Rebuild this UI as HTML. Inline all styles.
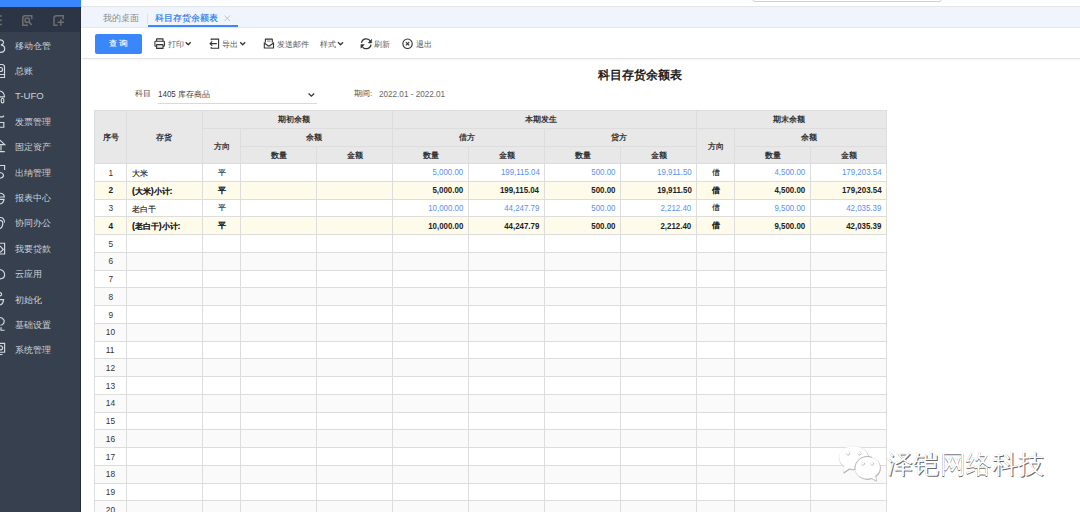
<!DOCTYPE html><html><head><meta charset="utf-8"><style>
*{margin:0;padding:0;box-sizing:border-box}
html,body{width:1080px;height:512px;overflow:hidden;background:#fff;font-family:"Liberation Sans",sans-serif;color:#333}
.a{position:absolute}
svg{position:absolute;overflow:visible}
.side{left:0;top:0;width:81px;height:512px;background:#36404e;border-right:1px solid #262d37}
.blue{left:0;top:0;width:81px;height:7px;background:#3a86ff}
.sidetop{left:0;top:7px;width:80px;height:25.3px;background:#2c3546}
.mi{left:15px;font-size:9px;color:#cdd1d7;line-height:12px;white-space:nowrap}
.tabbar{left:81px;top:6px;width:999px;height:22px;background:#f0f5fd;border-top:1px solid #e3e6eb;border-bottom:1px solid #e6eaf0}
.tb{font-size:7.7px;color:#5a5a5a;white-space:nowrap;line-height:10px}
.cell{position:absolute;border-right:1px solid #dddddd;border-bottom:1px solid #dddddd;display:flex;align-items:center;justify-content:center;font-size:8.5px;white-space:nowrap;overflow:visible;color:#333}
.hd{background:#e8e8e8;font-weight:bold;color:#333;font-size:8.2px}
.r{justify-content:flex-end;padding-right:4.5px}
.l{justify-content:flex-start;padding-left:5px}
.n{display:inline-block;font-size:9.3px;transform:scaleX(.85);transform-origin:right center}
.nc{display:inline-block;font-size:9.8px;transform:scaleX(.85);transform-origin:center center;position:relative;top:-0.2px}
.bl{color:#5b8ff0}
.b{font-weight:bold;color:#222}
.cj{position:relative;top:1.2px;font-size:8.4px}
.nb .cj{text-shadow:0.25px 0 0 rgba(30,30,30,.7)}
.b .cj{text-shadow:0.25px 0 0 rgba(20,20,20,.7)}
.hd span.h{position:relative;top:0px}

</style></head><body>
<div class="a side"></div><div class="a blue"></div><div class="a sidetop"></div>
<svg style="left:0;top:0" width="81" height="32"><g stroke="#6e6e6e" stroke-width="1.5" fill="none"><path d="M-2 16H1.8M-2 20.3H1.8M-2 24.6H1.8"/><path d="M31.8 19.2V15.8H25.2Q22.8 15.8 22.8 18.2V25.2H28"/><circle cx="27.2" cy="20.2" r="2.2"/><path d="M28.9 22L31.8 24.9"/><path d="M63.2 19.2V15.8H56.4Q54 15.8 54 18.2V25.2H57.6 M57.6 22.3H63.9 M60.8 19.2V25.8"/></g></svg>
<div class="a mi" style="top:39.6px;">移动仓管</div>
<div class="a mi" style="top:65.0px;">总账</div>
<div class="a mi" style="top:90.4px;font-size:9.6px;">T-UFO</div>
<div class="a mi" style="top:115.8px;">发票管理</div>
<div class="a mi" style="top:141.2px;">固定资产</div>
<div class="a mi" style="top:166.6px;">出纳管理</div>
<div class="a mi" style="top:192.0px;">报表中心</div>
<div class="a mi" style="top:217.4px;">协同办公</div>
<div class="a mi" style="top:242.8px;">我要贷款</div>
<div class="a mi" style="top:268.2px;">云应用</div>
<div class="a mi" style="top:293.6px;">初始化</div>
<div class="a mi" style="top:319.0px;">基础设置</div>
<div class="a mi" style="top:344.4px;">系统管理</div>
<svg style="left:0;top:0" width="12" height="512"><g stroke="#d5d9df" stroke-width="1.15" fill="none"><path d="M0 39.9C2.3 39.9 3.6 41.1 3.5 42.7C3.4 44 2.2 44.6 1 44.9C3.5 45.4 4.8 46.9 4.7 48.9C4.6 51.2 2.6 52.4 0 52.3"/><path d="M0 64.5H2C3.6 64.5 4.5 65.5 4.5 67V77.5H0 M0 74.5H4.5"/><circle cx="0.6" cy="69.5" r="2"/><path d="M0 91C2.5 91.5 4.3 93.5 4.5 96.8H0"/><rect x="1.3" y="98.5" width="2.5" height="4.3" rx="1"/><path d="M0 116.8L2.8 116.8L4 115.8 M0 122.5H3.8V127.2H0"/><path d="M0 140.2L4.7 144.6H0 M1 145.5V150.5 M0 151.6H4.8"/><path d="M0 165.5H4.6V170 M0 172.5C2 172.8 3.5 174 3.5 175.6C3.5 177.2 2 178 0 178.3"/><path d="M0 193.2C2.6 193.3 4.3 195 4.4 197H0 M0 199.3H4 C3.6 201.8 2 203.6 0 204"/><path d="M0 217.5C3 217.2 4.6 219.5 4.5 222.5 M0 220.3C1.8 220.3 2.8 221.6 2.8 223.3C2.8 226 1.3 228.2 0 228.8"/><path d="M0 243.2H4.6V254H0 M0 246L3.3 249.5L0 252.6"/><path d="M0 269.5C2.3 270 4.6 272 4.6 274.8C4.6 277.6 2.5 278.8 0 278.8"/><circle cx="0" cy="294.2" r="1.6"/><path d="M0 299.6H3.6C3.3 302.8 1.6 304.6 0 305"/><path d="M0 317.5L2.4 318.3L4.2 320.5L3.8 323.2L2.2 324.8L0.5 325.3 M1 327.2V330.2H4.6"/><path d="M0 343.3H4.6V352.2H0 M0 354.5H2.5"/><circle cx="0.6" cy="347.8" r="2"/></g></svg>
<div class="a" style="left:752px;top:-10px;width:190px;height:11.5px;border:1px solid #cfcfcf;border-radius:3px;background:#fff"></div>
<div class="a tabbar"></div>
<div class="a" style="left:103px;top:13.3px;font-size:9px;line-height:11px;color:#8a8a8a">我的桌面</div>
<div class="a" style="left:147px;top:14px;width:1px;height:10px;background:#dde1e8"></div>
<div class="a" style="left:154.5px;top:13.3px;font-size:9px;line-height:11px;color:#3b7ff0;text-shadow:0.3px 0 0 rgba(59,127,240,.8)">科目存货余额表</div>
<svg style="left:224px;top:15.3px" width="7" height="7"><path d="M0.5 0.5L6 6M6 0.5L0.5 6" stroke="#c4c4c4" stroke-width="1"/></svg>
<div class="a" style="left:148px;top:25px;width:90px;height:2px;background:#3a86ff"></div>
<div class="a" style="left:82px;top:58.3px;width:998px;height:1.2px;background:#e4e4e4;box-shadow:0 1px 2px #eee"></div>
<div class="a" style="left:94.5px;top:33.5px;width:47.5px;height:20.3px;background:#3a86fb;border-radius:2px;color:#fff;font-size:8.3px;line-height:19px;text-align:center;letter-spacing:2.5px;padding-left:2px;text-shadow:0.3px 0 0 rgba(255,255,255,.7)">查询</div>
<div class="a tb" style="left:167.8px;top:39.6px">打印</div>
<div class="a tb" style="left:222.1px;top:39.6px">导出</div>
<div class="a tb" style="left:276.8px;top:39.6px">发送邮件</div>
<div class="a tb" style="left:320px;top:39.6px">样式</div>
<div class="a tb" style="left:374.3px;top:39.6px">刷新</div>
<div class="a tb" style="left:415.6px;top:39.6px">退出</div>
<svg style="left:0;top:0" width="500" height="60"><g stroke="#333" stroke-width="1.1" fill="none" stroke-linejoin="round"><path d="M156.6 41.2V38.9H163V41.2"/><path d="M156.4 46.2H155.6Q154.9 46.2 154.9 45.5V41.9Q154.9 41.2 155.6 41.2H163.8Q164.4 41.2 164.4 41.9V45.5Q164.4 46.2 163.8 46.2H163"/><path d="M156.6 44.6H163V48.4H156.6Z" fill="#e8e8e8"/><path d="M185.7 42.3L188.2 44.8L190.7 42.3" stroke-width="1.3"/><path d="M211.2 40.3V39.1H218.6V48.2H211.2V47"/><path d="M216.8 43.6H210 M212.3 41.4L210 43.6L212.3 45.8"/><path d="M240.2 42.3L242.7 44.8L245.2 42.3" stroke-width="1.3"/><path d="M265.4 42.6V39.1H272.3V42.6"/><path d="M267.1 41.1H270.6" stroke="#9a9a9a" stroke-width="1.3"/><path d="M264.3 42.2V48H273.5V42.2"/><path d="M264.5 43.2L268.9 46.3L273.3 43.2"/><path d="M266.2 47.2H271.6" stroke="#aaa" stroke-width="0.9"/><path d="M338 42.3L340.5 44.8L343 42.3" stroke-width="1.3"/><path d="M361.5 42.9A4.75 4.75 0 0 1 370.4 41.3" stroke-width="1.25"/><path d="M371 44.6A4.75 4.75 0 0 1 362.1 46.2" stroke-width="1.25"/><path d="M371.6 39.3V42.9H368.2Z" fill="#333" stroke-width="0.5"/><path d="M360.9 48.2V44.6H364.3Z" fill="#333" stroke-width="0.5"/><circle cx="407.55" cy="43.75" r="4.7"/><path d="M405.9 42.1L409.2 45.4M409.2 42.1L405.9 45.4" stroke-width="1.2"/></g></svg>
<div class="a" style="left:598px;top:68px;font-size:12px;line-height:15px;font-weight:bold;color:#222">科目存货余额表</div>
<div class="a" style="left:135px;top:89.1px;font-size:8px;line-height:10px;color:#4a4a4a">科目</div>
<div class="a" style="left:158px;top:89.1px;font-size:8px;line-height:10px;color:#3a3a3a"><span style="font-size:9.3px;display:inline-block;transform:scaleX(.86);transform-origin:left center;margin-right:-3px">1405</span> 库存商品</div>
<svg style="left:307.5px;top:92.6px" width="7" height="4"><path d="M0.6 0.6L3.4 3.2L6.2 0.6" stroke="#333" stroke-width="1.3" fill="none"/></svg>
<div class="a" style="left:158px;top:103px;width:158.5px;height:1px;background:#d9d9d9"></div>
<div class="a" style="left:354px;top:89.1px;font-size:8px;line-height:10px;color:#4a4a4a">期间:</div>
<div class="a" style="left:379.3px;top:88.8px;font-size:9.3px;line-height:10px;color:#666;display:inline-block;transform:scaleX(.875);transform-origin:left center;white-space:nowrap">2022.01 - 2022.01</div>
<div class="a" style="left:94px;top:110.25px;width:793px;height:1px;background:#dddddd"></div>
<div class="a" style="left:94px;top:110.25px;width:1px;height:420px;background:#dddddd"></div>
<div class="cell hd" style="left:95px;top:111.25px;width:32px;height:52.75px;"><span class="h">序号</span></div>
<div class="cell hd" style="left:127px;top:111.25px;width:76px;height:52.75px;padding-right:2px"><span class="h">存货</span></div>
<div class="cell hd" style="left:203px;top:111.25px;width:190px;height:18.05px;padding-right:8px"><span class="h">期初余额</span></div>
<div class="cell hd" style="left:203px;top:129.30px;width:38px;height:34.70px;"><span class="h">方向</span></div>
<div class="cell hd" style="left:241px;top:129.30px;width:152px;height:17.90px;padding-right:5px"><span class="h">余额</span></div>
<div class="cell hd" style="left:241px;top:147.20px;width:76px;height:16.80px;"><span class="h">数量</span></div>
<div class="cell hd" style="left:317px;top:147.20px;width:76px;height:16.80px;"><span class="h">金额</span></div>
<div class="cell hd" style="left:393px;top:111.25px;width:304px;height:18.05px;padding-right:7px"><span class="h">本期发生</span></div>
<div class="cell hd" style="left:393px;top:129.30px;width:152px;height:17.90px;padding-right:4px"><span class="h">借方</span></div>
<div class="cell hd" style="left:545px;top:129.30px;width:152px;height:17.90px;padding-right:4px"><span class="h">贷方</span></div>
<div class="cell hd" style="left:393px;top:147.20px;width:76px;height:16.80px;"><span class="h">数量</span></div>
<div class="cell hd" style="left:469px;top:147.20px;width:76px;height:16.80px;"><span class="h">金额</span></div>
<div class="cell hd" style="left:545px;top:147.20px;width:76px;height:16.80px;"><span class="h">数量</span></div>
<div class="cell hd" style="left:621px;top:147.20px;width:76px;height:16.80px;"><span class="h">金额</span></div>
<div class="cell hd" style="left:697px;top:111.25px;width:190px;height:18.05px;padding-right:6px"><span class="h">期末余额</span></div>
<div class="cell hd" style="left:697px;top:129.30px;width:38px;height:34.70px;"><span class="h">方向</span></div>
<div class="cell hd" style="left:735px;top:129.30px;width:152px;height:17.90px;padding-right:4px"><span class="h">余额</span></div>
<div class="cell hd" style="left:735px;top:147.20px;width:76px;height:16.80px;"><span class="h">数量</span></div>
<div class="cell hd" style="left:811px;top:147.20px;width:76px;height:16.80px;"><span class="h">金额</span></div>
<div class="cell nb" style="left:95px;top:164.00px;width:32px;height:17.75px;background:#ffffff"><span class="nc">1</span></div>
<div class="cell l nb" style="left:127px;top:164.00px;width:76px;height:17.75px;background:#ffffff"><span class="cj">大米</span></div>
<div class="cell nb" style="left:203px;top:164.00px;width:38px;height:17.75px;background:#ffffff"><span class="cj" style="top:0">平</span></div>
<div class="cell r bl" style="left:241px;top:164.00px;width:76px;height:17.75px;background:#ffffff"></div>
<div class="cell r bl" style="left:317px;top:164.00px;width:76px;height:17.75px;background:#ffffff"></div>
<div class="cell r bl" style="left:393px;top:164.00px;width:76px;height:17.75px;background:#ffffff"><span class="n">5,000.00</span></div>
<div class="cell r bl" style="left:469px;top:164.00px;width:76px;height:17.75px;background:#ffffff"><span class="n">199,115.04</span></div>
<div class="cell r bl" style="left:545px;top:164.00px;width:76px;height:17.75px;background:#ffffff"><span class="n">500.00</span></div>
<div class="cell r bl" style="left:621px;top:164.00px;width:76px;height:17.75px;background:#ffffff"><span class="n">19,911.50</span></div>
<div class="cell nb" style="left:697px;top:164.00px;width:38px;height:17.75px;background:#ffffff"><span class="cj" style="top:0">借</span></div>
<div class="cell r bl" style="left:735px;top:164.00px;width:76px;height:17.75px;background:#ffffff"><span class="n">4,500.00</span></div>
<div class="cell r bl" style="left:811px;top:164.00px;width:76px;height:17.75px;background:#ffffff"><span class="n">179,203.54</span></div>
<div class="cell b" style="left:95px;top:181.75px;width:32px;height:17.75px;background:#fffbeb"><span class="nc">2</span></div>
<div class="cell l b" style="left:127px;top:181.75px;width:76px;height:17.75px;background:#fffbeb"><span class="cj">(大米)小计:</span></div>
<div class="cell b" style="left:203px;top:181.75px;width:38px;height:17.75px;background:#fffbeb"><span class="cj" style="top:0">平</span></div>
<div class="cell r b" style="left:241px;top:181.75px;width:76px;height:17.75px;background:#fffbeb"></div>
<div class="cell r b" style="left:317px;top:181.75px;width:76px;height:17.75px;background:#fffbeb"></div>
<div class="cell r b" style="left:393px;top:181.75px;width:76px;height:17.75px;background:#fffbeb"><span class="n">5,000.00</span></div>
<div class="cell r b" style="left:469px;top:181.75px;width:76px;height:17.75px;background:#fffbeb"><span class="n">199,115.04</span></div>
<div class="cell r b" style="left:545px;top:181.75px;width:76px;height:17.75px;background:#fffbeb"><span class="n">500.00</span></div>
<div class="cell r b" style="left:621px;top:181.75px;width:76px;height:17.75px;background:#fffbeb"><span class="n">19,911.50</span></div>
<div class="cell b" style="left:697px;top:181.75px;width:38px;height:17.75px;background:#fffbeb"><span class="cj" style="top:0">借</span></div>
<div class="cell r b" style="left:735px;top:181.75px;width:76px;height:17.75px;background:#fffbeb"><span class="n">4,500.00</span></div>
<div class="cell r b" style="left:811px;top:181.75px;width:76px;height:17.75px;background:#fffbeb"><span class="n">179,203.54</span></div>
<div class="cell nb" style="left:95px;top:199.50px;width:32px;height:17.75px;background:#ffffff"><span class="nc">3</span></div>
<div class="cell l nb" style="left:127px;top:199.50px;width:76px;height:17.75px;background:#ffffff"><span class="cj">老白干</span></div>
<div class="cell nb" style="left:203px;top:199.50px;width:38px;height:17.75px;background:#ffffff"><span class="cj" style="top:0">平</span></div>
<div class="cell r bl" style="left:241px;top:199.50px;width:76px;height:17.75px;background:#ffffff"></div>
<div class="cell r bl" style="left:317px;top:199.50px;width:76px;height:17.75px;background:#ffffff"></div>
<div class="cell r bl" style="left:393px;top:199.50px;width:76px;height:17.75px;background:#ffffff"><span class="n">10,000.00</span></div>
<div class="cell r bl" style="left:469px;top:199.50px;width:76px;height:17.75px;background:#ffffff"><span class="n">44,247.79</span></div>
<div class="cell r bl" style="left:545px;top:199.50px;width:76px;height:17.75px;background:#ffffff"><span class="n">500.00</span></div>
<div class="cell r bl" style="left:621px;top:199.50px;width:76px;height:17.75px;background:#ffffff"><span class="n">2,212.40</span></div>
<div class="cell nb" style="left:697px;top:199.50px;width:38px;height:17.75px;background:#ffffff"><span class="cj" style="top:0">借</span></div>
<div class="cell r bl" style="left:735px;top:199.50px;width:76px;height:17.75px;background:#ffffff"><span class="n">9,500.00</span></div>
<div class="cell r bl" style="left:811px;top:199.50px;width:76px;height:17.75px;background:#ffffff"><span class="n">42,035.39</span></div>
<div class="cell b" style="left:95px;top:217.25px;width:32px;height:17.75px;background:#fffbeb"><span class="nc">4</span></div>
<div class="cell l b" style="left:127px;top:217.25px;width:76px;height:17.75px;background:#fffbeb"><span class="cj">(老白干)小计:</span></div>
<div class="cell b" style="left:203px;top:217.25px;width:38px;height:17.75px;background:#fffbeb"><span class="cj" style="top:0">平</span></div>
<div class="cell r b" style="left:241px;top:217.25px;width:76px;height:17.75px;background:#fffbeb"></div>
<div class="cell r b" style="left:317px;top:217.25px;width:76px;height:17.75px;background:#fffbeb"></div>
<div class="cell r b" style="left:393px;top:217.25px;width:76px;height:17.75px;background:#fffbeb"><span class="n">10,000.00</span></div>
<div class="cell r b" style="left:469px;top:217.25px;width:76px;height:17.75px;background:#fffbeb"><span class="n">44,247.79</span></div>
<div class="cell r b" style="left:545px;top:217.25px;width:76px;height:17.75px;background:#fffbeb"><span class="n">500.00</span></div>
<div class="cell r b" style="left:621px;top:217.25px;width:76px;height:17.75px;background:#fffbeb"><span class="n">2,212.40</span></div>
<div class="cell b" style="left:697px;top:217.25px;width:38px;height:17.75px;background:#fffbeb"><span class="cj" style="top:0">借</span></div>
<div class="cell r b" style="left:735px;top:217.25px;width:76px;height:17.75px;background:#fffbeb"><span class="n">9,500.00</span></div>
<div class="cell r b" style="left:811px;top:217.25px;width:76px;height:17.75px;background:#fffbeb"><span class="n">42,035.39</span></div>
<div class="cell nb" style="left:95px;top:235.00px;width:32px;height:17.75px;background:#ffffff"><span class="nc">5</span></div>
<div class="cell " style="left:127px;top:235.00px;width:76px;height:17.75px;background:#ffffff"></div>
<div class="cell " style="left:203px;top:235.00px;width:38px;height:17.75px;background:#ffffff"></div>
<div class="cell " style="left:241px;top:235.00px;width:76px;height:17.75px;background:#ffffff"></div>
<div class="cell " style="left:317px;top:235.00px;width:76px;height:17.75px;background:#ffffff"></div>
<div class="cell " style="left:393px;top:235.00px;width:76px;height:17.75px;background:#ffffff"></div>
<div class="cell " style="left:469px;top:235.00px;width:76px;height:17.75px;background:#ffffff"></div>
<div class="cell " style="left:545px;top:235.00px;width:76px;height:17.75px;background:#ffffff"></div>
<div class="cell " style="left:621px;top:235.00px;width:76px;height:17.75px;background:#ffffff"></div>
<div class="cell " style="left:697px;top:235.00px;width:38px;height:17.75px;background:#ffffff"></div>
<div class="cell " style="left:735px;top:235.00px;width:76px;height:17.75px;background:#ffffff"></div>
<div class="cell " style="left:811px;top:235.00px;width:76px;height:17.75px;background:#ffffff"></div>
<div class="cell nb" style="left:95px;top:252.75px;width:32px;height:17.75px;background:#fafafa"><span class="nc">6</span></div>
<div class="cell " style="left:127px;top:252.75px;width:76px;height:17.75px;background:#fafafa"></div>
<div class="cell " style="left:203px;top:252.75px;width:38px;height:17.75px;background:#fafafa"></div>
<div class="cell " style="left:241px;top:252.75px;width:76px;height:17.75px;background:#fafafa"></div>
<div class="cell " style="left:317px;top:252.75px;width:76px;height:17.75px;background:#fafafa"></div>
<div class="cell " style="left:393px;top:252.75px;width:76px;height:17.75px;background:#fafafa"></div>
<div class="cell " style="left:469px;top:252.75px;width:76px;height:17.75px;background:#fafafa"></div>
<div class="cell " style="left:545px;top:252.75px;width:76px;height:17.75px;background:#fafafa"></div>
<div class="cell " style="left:621px;top:252.75px;width:76px;height:17.75px;background:#fafafa"></div>
<div class="cell " style="left:697px;top:252.75px;width:38px;height:17.75px;background:#fafafa"></div>
<div class="cell " style="left:735px;top:252.75px;width:76px;height:17.75px;background:#fafafa"></div>
<div class="cell " style="left:811px;top:252.75px;width:76px;height:17.75px;background:#fafafa"></div>
<div class="cell nb" style="left:95px;top:270.50px;width:32px;height:17.75px;background:#ffffff"><span class="nc">7</span></div>
<div class="cell " style="left:127px;top:270.50px;width:76px;height:17.75px;background:#ffffff"></div>
<div class="cell " style="left:203px;top:270.50px;width:38px;height:17.75px;background:#ffffff"></div>
<div class="cell " style="left:241px;top:270.50px;width:76px;height:17.75px;background:#ffffff"></div>
<div class="cell " style="left:317px;top:270.50px;width:76px;height:17.75px;background:#ffffff"></div>
<div class="cell " style="left:393px;top:270.50px;width:76px;height:17.75px;background:#ffffff"></div>
<div class="cell " style="left:469px;top:270.50px;width:76px;height:17.75px;background:#ffffff"></div>
<div class="cell " style="left:545px;top:270.50px;width:76px;height:17.75px;background:#ffffff"></div>
<div class="cell " style="left:621px;top:270.50px;width:76px;height:17.75px;background:#ffffff"></div>
<div class="cell " style="left:697px;top:270.50px;width:38px;height:17.75px;background:#ffffff"></div>
<div class="cell " style="left:735px;top:270.50px;width:76px;height:17.75px;background:#ffffff"></div>
<div class="cell " style="left:811px;top:270.50px;width:76px;height:17.75px;background:#ffffff"></div>
<div class="cell nb" style="left:95px;top:288.25px;width:32px;height:17.75px;background:#fafafa"><span class="nc">8</span></div>
<div class="cell " style="left:127px;top:288.25px;width:76px;height:17.75px;background:#fafafa"></div>
<div class="cell " style="left:203px;top:288.25px;width:38px;height:17.75px;background:#fafafa"></div>
<div class="cell " style="left:241px;top:288.25px;width:76px;height:17.75px;background:#fafafa"></div>
<div class="cell " style="left:317px;top:288.25px;width:76px;height:17.75px;background:#fafafa"></div>
<div class="cell " style="left:393px;top:288.25px;width:76px;height:17.75px;background:#fafafa"></div>
<div class="cell " style="left:469px;top:288.25px;width:76px;height:17.75px;background:#fafafa"></div>
<div class="cell " style="left:545px;top:288.25px;width:76px;height:17.75px;background:#fafafa"></div>
<div class="cell " style="left:621px;top:288.25px;width:76px;height:17.75px;background:#fafafa"></div>
<div class="cell " style="left:697px;top:288.25px;width:38px;height:17.75px;background:#fafafa"></div>
<div class="cell " style="left:735px;top:288.25px;width:76px;height:17.75px;background:#fafafa"></div>
<div class="cell " style="left:811px;top:288.25px;width:76px;height:17.75px;background:#fafafa"></div>
<div class="cell nb" style="left:95px;top:306.00px;width:32px;height:17.75px;background:#ffffff"><span class="nc">9</span></div>
<div class="cell " style="left:127px;top:306.00px;width:76px;height:17.75px;background:#ffffff"></div>
<div class="cell " style="left:203px;top:306.00px;width:38px;height:17.75px;background:#ffffff"></div>
<div class="cell " style="left:241px;top:306.00px;width:76px;height:17.75px;background:#ffffff"></div>
<div class="cell " style="left:317px;top:306.00px;width:76px;height:17.75px;background:#ffffff"></div>
<div class="cell " style="left:393px;top:306.00px;width:76px;height:17.75px;background:#ffffff"></div>
<div class="cell " style="left:469px;top:306.00px;width:76px;height:17.75px;background:#ffffff"></div>
<div class="cell " style="left:545px;top:306.00px;width:76px;height:17.75px;background:#ffffff"></div>
<div class="cell " style="left:621px;top:306.00px;width:76px;height:17.75px;background:#ffffff"></div>
<div class="cell " style="left:697px;top:306.00px;width:38px;height:17.75px;background:#ffffff"></div>
<div class="cell " style="left:735px;top:306.00px;width:76px;height:17.75px;background:#ffffff"></div>
<div class="cell " style="left:811px;top:306.00px;width:76px;height:17.75px;background:#ffffff"></div>
<div class="cell nb" style="left:95px;top:323.75px;width:32px;height:17.75px;background:#fafafa"><span class="nc">10</span></div>
<div class="cell " style="left:127px;top:323.75px;width:76px;height:17.75px;background:#fafafa"></div>
<div class="cell " style="left:203px;top:323.75px;width:38px;height:17.75px;background:#fafafa"></div>
<div class="cell " style="left:241px;top:323.75px;width:76px;height:17.75px;background:#fafafa"></div>
<div class="cell " style="left:317px;top:323.75px;width:76px;height:17.75px;background:#fafafa"></div>
<div class="cell " style="left:393px;top:323.75px;width:76px;height:17.75px;background:#fafafa"></div>
<div class="cell " style="left:469px;top:323.75px;width:76px;height:17.75px;background:#fafafa"></div>
<div class="cell " style="left:545px;top:323.75px;width:76px;height:17.75px;background:#fafafa"></div>
<div class="cell " style="left:621px;top:323.75px;width:76px;height:17.75px;background:#fafafa"></div>
<div class="cell " style="left:697px;top:323.75px;width:38px;height:17.75px;background:#fafafa"></div>
<div class="cell " style="left:735px;top:323.75px;width:76px;height:17.75px;background:#fafafa"></div>
<div class="cell " style="left:811px;top:323.75px;width:76px;height:17.75px;background:#fafafa"></div>
<div class="cell nb" style="left:95px;top:341.50px;width:32px;height:17.75px;background:#ffffff"><span class="nc">11</span></div>
<div class="cell " style="left:127px;top:341.50px;width:76px;height:17.75px;background:#ffffff"></div>
<div class="cell " style="left:203px;top:341.50px;width:38px;height:17.75px;background:#ffffff"></div>
<div class="cell " style="left:241px;top:341.50px;width:76px;height:17.75px;background:#ffffff"></div>
<div class="cell " style="left:317px;top:341.50px;width:76px;height:17.75px;background:#ffffff"></div>
<div class="cell " style="left:393px;top:341.50px;width:76px;height:17.75px;background:#ffffff"></div>
<div class="cell " style="left:469px;top:341.50px;width:76px;height:17.75px;background:#ffffff"></div>
<div class="cell " style="left:545px;top:341.50px;width:76px;height:17.75px;background:#ffffff"></div>
<div class="cell " style="left:621px;top:341.50px;width:76px;height:17.75px;background:#ffffff"></div>
<div class="cell " style="left:697px;top:341.50px;width:38px;height:17.75px;background:#ffffff"></div>
<div class="cell " style="left:735px;top:341.50px;width:76px;height:17.75px;background:#ffffff"></div>
<div class="cell " style="left:811px;top:341.50px;width:76px;height:17.75px;background:#ffffff"></div>
<div class="cell nb" style="left:95px;top:359.25px;width:32px;height:17.75px;background:#fafafa"><span class="nc">12</span></div>
<div class="cell " style="left:127px;top:359.25px;width:76px;height:17.75px;background:#fafafa"></div>
<div class="cell " style="left:203px;top:359.25px;width:38px;height:17.75px;background:#fafafa"></div>
<div class="cell " style="left:241px;top:359.25px;width:76px;height:17.75px;background:#fafafa"></div>
<div class="cell " style="left:317px;top:359.25px;width:76px;height:17.75px;background:#fafafa"></div>
<div class="cell " style="left:393px;top:359.25px;width:76px;height:17.75px;background:#fafafa"></div>
<div class="cell " style="left:469px;top:359.25px;width:76px;height:17.75px;background:#fafafa"></div>
<div class="cell " style="left:545px;top:359.25px;width:76px;height:17.75px;background:#fafafa"></div>
<div class="cell " style="left:621px;top:359.25px;width:76px;height:17.75px;background:#fafafa"></div>
<div class="cell " style="left:697px;top:359.25px;width:38px;height:17.75px;background:#fafafa"></div>
<div class="cell " style="left:735px;top:359.25px;width:76px;height:17.75px;background:#fafafa"></div>
<div class="cell " style="left:811px;top:359.25px;width:76px;height:17.75px;background:#fafafa"></div>
<div class="cell nb" style="left:95px;top:377.00px;width:32px;height:17.75px;background:#ffffff"><span class="nc">13</span></div>
<div class="cell " style="left:127px;top:377.00px;width:76px;height:17.75px;background:#ffffff"></div>
<div class="cell " style="left:203px;top:377.00px;width:38px;height:17.75px;background:#ffffff"></div>
<div class="cell " style="left:241px;top:377.00px;width:76px;height:17.75px;background:#ffffff"></div>
<div class="cell " style="left:317px;top:377.00px;width:76px;height:17.75px;background:#ffffff"></div>
<div class="cell " style="left:393px;top:377.00px;width:76px;height:17.75px;background:#ffffff"></div>
<div class="cell " style="left:469px;top:377.00px;width:76px;height:17.75px;background:#ffffff"></div>
<div class="cell " style="left:545px;top:377.00px;width:76px;height:17.75px;background:#ffffff"></div>
<div class="cell " style="left:621px;top:377.00px;width:76px;height:17.75px;background:#ffffff"></div>
<div class="cell " style="left:697px;top:377.00px;width:38px;height:17.75px;background:#ffffff"></div>
<div class="cell " style="left:735px;top:377.00px;width:76px;height:17.75px;background:#ffffff"></div>
<div class="cell " style="left:811px;top:377.00px;width:76px;height:17.75px;background:#ffffff"></div>
<div class="cell nb" style="left:95px;top:394.75px;width:32px;height:17.75px;background:#fafafa"><span class="nc">14</span></div>
<div class="cell " style="left:127px;top:394.75px;width:76px;height:17.75px;background:#fafafa"></div>
<div class="cell " style="left:203px;top:394.75px;width:38px;height:17.75px;background:#fafafa"></div>
<div class="cell " style="left:241px;top:394.75px;width:76px;height:17.75px;background:#fafafa"></div>
<div class="cell " style="left:317px;top:394.75px;width:76px;height:17.75px;background:#fafafa"></div>
<div class="cell " style="left:393px;top:394.75px;width:76px;height:17.75px;background:#fafafa"></div>
<div class="cell " style="left:469px;top:394.75px;width:76px;height:17.75px;background:#fafafa"></div>
<div class="cell " style="left:545px;top:394.75px;width:76px;height:17.75px;background:#fafafa"></div>
<div class="cell " style="left:621px;top:394.75px;width:76px;height:17.75px;background:#fafafa"></div>
<div class="cell " style="left:697px;top:394.75px;width:38px;height:17.75px;background:#fafafa"></div>
<div class="cell " style="left:735px;top:394.75px;width:76px;height:17.75px;background:#fafafa"></div>
<div class="cell " style="left:811px;top:394.75px;width:76px;height:17.75px;background:#fafafa"></div>
<div class="cell nb" style="left:95px;top:412.50px;width:32px;height:17.75px;background:#ffffff"><span class="nc">15</span></div>
<div class="cell " style="left:127px;top:412.50px;width:76px;height:17.75px;background:#ffffff"></div>
<div class="cell " style="left:203px;top:412.50px;width:38px;height:17.75px;background:#ffffff"></div>
<div class="cell " style="left:241px;top:412.50px;width:76px;height:17.75px;background:#ffffff"></div>
<div class="cell " style="left:317px;top:412.50px;width:76px;height:17.75px;background:#ffffff"></div>
<div class="cell " style="left:393px;top:412.50px;width:76px;height:17.75px;background:#ffffff"></div>
<div class="cell " style="left:469px;top:412.50px;width:76px;height:17.75px;background:#ffffff"></div>
<div class="cell " style="left:545px;top:412.50px;width:76px;height:17.75px;background:#ffffff"></div>
<div class="cell " style="left:621px;top:412.50px;width:76px;height:17.75px;background:#ffffff"></div>
<div class="cell " style="left:697px;top:412.50px;width:38px;height:17.75px;background:#ffffff"></div>
<div class="cell " style="left:735px;top:412.50px;width:76px;height:17.75px;background:#ffffff"></div>
<div class="cell " style="left:811px;top:412.50px;width:76px;height:17.75px;background:#ffffff"></div>
<div class="cell nb" style="left:95px;top:430.25px;width:32px;height:17.75px;background:#fafafa"><span class="nc">16</span></div>
<div class="cell " style="left:127px;top:430.25px;width:76px;height:17.75px;background:#fafafa"></div>
<div class="cell " style="left:203px;top:430.25px;width:38px;height:17.75px;background:#fafafa"></div>
<div class="cell " style="left:241px;top:430.25px;width:76px;height:17.75px;background:#fafafa"></div>
<div class="cell " style="left:317px;top:430.25px;width:76px;height:17.75px;background:#fafafa"></div>
<div class="cell " style="left:393px;top:430.25px;width:76px;height:17.75px;background:#fafafa"></div>
<div class="cell " style="left:469px;top:430.25px;width:76px;height:17.75px;background:#fafafa"></div>
<div class="cell " style="left:545px;top:430.25px;width:76px;height:17.75px;background:#fafafa"></div>
<div class="cell " style="left:621px;top:430.25px;width:76px;height:17.75px;background:#fafafa"></div>
<div class="cell " style="left:697px;top:430.25px;width:38px;height:17.75px;background:#fafafa"></div>
<div class="cell " style="left:735px;top:430.25px;width:76px;height:17.75px;background:#fafafa"></div>
<div class="cell " style="left:811px;top:430.25px;width:76px;height:17.75px;background:#fafafa"></div>
<div class="cell nb" style="left:95px;top:448.00px;width:32px;height:17.75px;background:#ffffff"><span class="nc">17</span></div>
<div class="cell " style="left:127px;top:448.00px;width:76px;height:17.75px;background:#ffffff"></div>
<div class="cell " style="left:203px;top:448.00px;width:38px;height:17.75px;background:#ffffff"></div>
<div class="cell " style="left:241px;top:448.00px;width:76px;height:17.75px;background:#ffffff"></div>
<div class="cell " style="left:317px;top:448.00px;width:76px;height:17.75px;background:#ffffff"></div>
<div class="cell " style="left:393px;top:448.00px;width:76px;height:17.75px;background:#ffffff"></div>
<div class="cell " style="left:469px;top:448.00px;width:76px;height:17.75px;background:#ffffff"></div>
<div class="cell " style="left:545px;top:448.00px;width:76px;height:17.75px;background:#ffffff"></div>
<div class="cell " style="left:621px;top:448.00px;width:76px;height:17.75px;background:#ffffff"></div>
<div class="cell " style="left:697px;top:448.00px;width:38px;height:17.75px;background:#ffffff"></div>
<div class="cell " style="left:735px;top:448.00px;width:76px;height:17.75px;background:#ffffff"></div>
<div class="cell " style="left:811px;top:448.00px;width:76px;height:17.75px;background:#ffffff"></div>
<div class="cell nb" style="left:95px;top:465.75px;width:32px;height:17.75px;background:#fafafa"><span class="nc">18</span></div>
<div class="cell " style="left:127px;top:465.75px;width:76px;height:17.75px;background:#fafafa"></div>
<div class="cell " style="left:203px;top:465.75px;width:38px;height:17.75px;background:#fafafa"></div>
<div class="cell " style="left:241px;top:465.75px;width:76px;height:17.75px;background:#fafafa"></div>
<div class="cell " style="left:317px;top:465.75px;width:76px;height:17.75px;background:#fafafa"></div>
<div class="cell " style="left:393px;top:465.75px;width:76px;height:17.75px;background:#fafafa"></div>
<div class="cell " style="left:469px;top:465.75px;width:76px;height:17.75px;background:#fafafa"></div>
<div class="cell " style="left:545px;top:465.75px;width:76px;height:17.75px;background:#fafafa"></div>
<div class="cell " style="left:621px;top:465.75px;width:76px;height:17.75px;background:#fafafa"></div>
<div class="cell " style="left:697px;top:465.75px;width:38px;height:17.75px;background:#fafafa"></div>
<div class="cell " style="left:735px;top:465.75px;width:76px;height:17.75px;background:#fafafa"></div>
<div class="cell " style="left:811px;top:465.75px;width:76px;height:17.75px;background:#fafafa"></div>
<div class="cell nb" style="left:95px;top:483.50px;width:32px;height:17.75px;background:#ffffff"><span class="nc">19</span></div>
<div class="cell " style="left:127px;top:483.50px;width:76px;height:17.75px;background:#ffffff"></div>
<div class="cell " style="left:203px;top:483.50px;width:38px;height:17.75px;background:#ffffff"></div>
<div class="cell " style="left:241px;top:483.50px;width:76px;height:17.75px;background:#ffffff"></div>
<div class="cell " style="left:317px;top:483.50px;width:76px;height:17.75px;background:#ffffff"></div>
<div class="cell " style="left:393px;top:483.50px;width:76px;height:17.75px;background:#ffffff"></div>
<div class="cell " style="left:469px;top:483.50px;width:76px;height:17.75px;background:#ffffff"></div>
<div class="cell " style="left:545px;top:483.50px;width:76px;height:17.75px;background:#ffffff"></div>
<div class="cell " style="left:621px;top:483.50px;width:76px;height:17.75px;background:#ffffff"></div>
<div class="cell " style="left:697px;top:483.50px;width:38px;height:17.75px;background:#ffffff"></div>
<div class="cell " style="left:735px;top:483.50px;width:76px;height:17.75px;background:#ffffff"></div>
<div class="cell " style="left:811px;top:483.50px;width:76px;height:17.75px;background:#ffffff"></div>
<div class="cell nb" style="left:95px;top:501.25px;width:32px;height:17.75px;background:#fafafa"><span class="nc">20</span></div>
<div class="cell " style="left:127px;top:501.25px;width:76px;height:17.75px;background:#fafafa"></div>
<div class="cell " style="left:203px;top:501.25px;width:38px;height:17.75px;background:#fafafa"></div>
<div class="cell " style="left:241px;top:501.25px;width:76px;height:17.75px;background:#fafafa"></div>
<div class="cell " style="left:317px;top:501.25px;width:76px;height:17.75px;background:#fafafa"></div>
<div class="cell " style="left:393px;top:501.25px;width:76px;height:17.75px;background:#fafafa"></div>
<div class="cell " style="left:469px;top:501.25px;width:76px;height:17.75px;background:#fafafa"></div>
<div class="cell " style="left:545px;top:501.25px;width:76px;height:17.75px;background:#fafafa"></div>
<div class="cell " style="left:621px;top:501.25px;width:76px;height:17.75px;background:#fafafa"></div>
<div class="cell " style="left:697px;top:501.25px;width:38px;height:17.75px;background:#fafafa"></div>
<div class="cell " style="left:735px;top:501.25px;width:76px;height:17.75px;background:#fafafa"></div>
<div class="cell " style="left:811px;top:501.25px;width:76px;height:17.75px;background:#fafafa"></div>
<svg style="left:0;top:0" width="1080" height="512"><g transform="translate(0.5,0.7)" fill="#8c8c8c" stroke="#8c8c8c" stroke-width="0.5" opacity="0.8"><path d="M853.6 446C845.5 446 839 451.2 839 457.6C839 461.2 841 464.3 844.2 466.4L843.3 472.6L849.3 468.6C850.7 469 852.1 469.2 853.6 469.2C861.7 469.2 868.2 464 868.2 457.6C868.2 451.2 861.7 446 853.6 446Z"/></g><g fill="#fff" stroke="#e6e6e6" stroke-width="0.4"><path d="M853.6 446C845.5 446 839 451.2 839 457.6C839 461.2 841 464.3 844.2 466.4L843.3 472.6L849.3 468.6C850.7 469 852.1 469.2 853.6 469.2C861.7 469.2 868.2 464 868.2 457.6C868.2 451.2 861.7 446 853.6 446Z"/></g><g transform="translate(0.5,0.7)" fill="#8c8c8c" stroke="#8c8c8c" stroke-width="0.5" opacity="0.8"><path d="M867.3 456.5C860.3 456.5 854.6 461.4 854.6 467.6C854.6 473.8 860.3 478.7 867.3 478.7C868.7 478.7 870 478.5 871.2 478.1L876.2 480.5L875.3 476.1C878.3 474 880 471 880 467.6C880 461.4 874.3 456.5 867.3 456.5Z"/></g><g fill="#fff" stroke="#e6e6e6" stroke-width="0.4"><path d="M867.3 456.5C860.3 456.5 854.6 461.4 854.6 467.6C854.6 473.8 860.3 478.7 867.3 478.7C868.7 478.7 870 478.5 871.2 478.1L876.2 480.5L875.3 476.1C878.3 474 880 471 880 467.6C880 461.4 874.3 456.5 867.3 456.5Z"/></g><path d="M855 470C854.3 462 860.3 456.5 867.3 456.5C869.2 456.5 870.8 456.9 872.2 457.5" fill="none" stroke="#8a8a8a" stroke-width="0.6"/><g fill="none" stroke="#8c8c8c" stroke-width="0.7"><circle cx="848.2" cy="453.6" r="1.4"/><circle cx="859.6" cy="453.6" r="1.4"/><circle cx="863.1" cy="463.8" r="1.3"/><circle cx="872.1" cy="463.8" r="1.3"/></g><g fill="#fff" stroke="none" transform="translate(-0.3,-0.4)"><circle cx="848.2" cy="453.6" r="1.4"/><circle cx="859.6" cy="453.6" r="1.4"/><circle cx="863.1" cy="463.8" r="1.3"/><circle cx="872.1" cy="463.8" r="1.3"/></g></svg>
<div class="a" style="left:887px;top:447.8px;font-size:26.2px;line-height:32px;color:#fff;letter-spacing:0.3px;text-shadow:0.6px 0.8px 0.5px rgba(0,0,0,.6),0 0 0.3px #aaa;white-space:nowrap">泽铠网络科技</div>
</body></html>
